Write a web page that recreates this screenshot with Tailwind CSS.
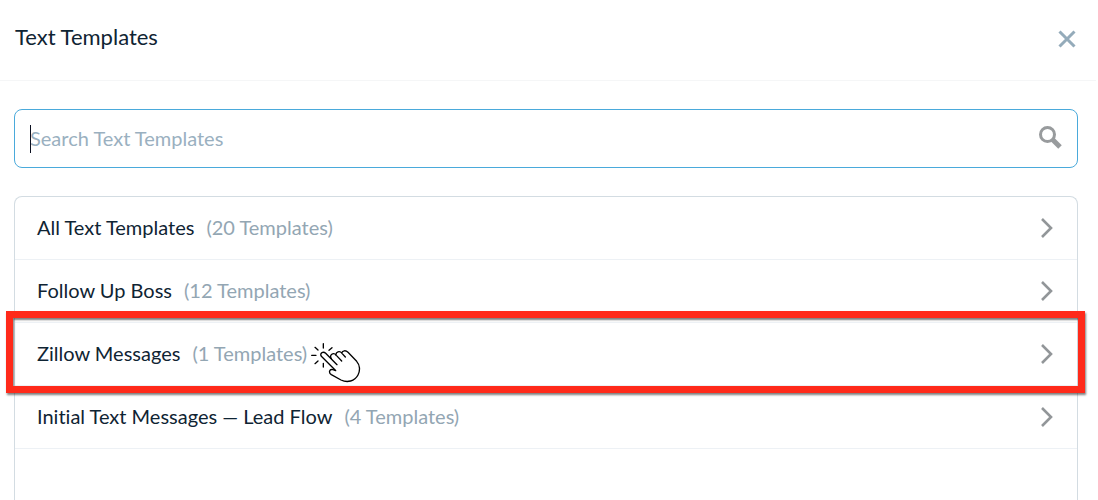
<!DOCTYPE html>
<html lang="en">
<head>
  <meta charset="UTF-8" />
  <meta name="viewport" content="width=device-width, initial-scale=1.0" />
  <title>Text Templates</title>
  <script src="https://cdn.jsdelivr.net/npm/@tailwindcss/browser@4"></script>
</head>

<body class="bg-white font-['Lato',sans-serif] text-[#0f2433] [font-variant-ligatures:none]">

  <div class="flex min-h-screen flex-col">

    <!-- Header -->
    <header class="mr-[2px] flex items-center justify-between border-b border-[#f5f6f7] pt-[23px] pr-[19px] pb-[29px] pl-[15px]">
      <h1 class="text-[22px] leading-7">Text Templates</h1>
      <button type="button" aria-label="Close" class="mt-1 text-[#94abba]">
        <svg class="h-5 w-5" viewBox="0 0 20 20" fill="none" stroke="currentColor" stroke-width="3">
          <path d="M2.500 2.500L17.500 17.500M17.500 2.500L2.500 17.500" />
        </svg>
      </button>
    </header>

    <main class="flex flex-1 flex-col pt-7 pr-5 pl-[14px]">

      <!-- Search -->
      <div class="relative flex h-[59px] items-center rounded-lg border border-[#4aaadb] px-[15px]">
        <input type="text" id="search" aria-label="Search Text Templates" placeholder="Search Text Templates" class="h-full flex-1 pb-[2px] text-[20px] outline-none placeholder:text-[#9ab0c0]" />
        <span class="absolute left-[15px] h-7 w-px bg-[#0b1020]"></span>
        <svg class="mb-1 h-6 w-6" viewBox="0 0 24 24" fill="none" stroke="#989b9d">
          <circle cx="9.500" cy="9.500" r="7" stroke-width="3" />
          <path d="M14 14L22 22" stroke-width="5" />
        </svg>
      </div>

      <!-- Template folders -->
      <ul class="mt-7 flex-1 rounded-t-lg border border-b-0 border-[#d3dce2] text-[20px] leading-[30px]">
        <li class="border-b border-[#edf1f5]">
          <a href="#" class="flex items-center pt-[15px] pr-6 pb-[17px] pl-[22px]">
            <span>All Text Templates</span>
            <span class="ml-3 text-[#93a6b3]">(20 Templates)</span>
            <svg class="mt-px ml-auto h-5 w-3" viewBox="0 0 12 20" fill="none" stroke="#929699" stroke-width="2.600"><path d="M1 1L10 10L1 19" /></svg>
          </a>
        </li>
        <li class="border-b border-[#edf1f5]">
          <a href="#" class="flex items-center pt-[15px] pr-6 pb-[17px] pl-[22px]">
            <span>Follow Up Boss</span>
            <span class="ml-3 text-[#93a6b3]">(12 Templates)</span>
            <svg class="mt-px ml-auto h-5 w-3" viewBox="0 0 12 20" fill="none" stroke="#929699" stroke-width="2.600"><path d="M1 1L10 10L1 19" /></svg>
          </a>
        </li>
        <li class="relative border-b border-[#edf1f5]">
          <a href="#" class="flex items-center pt-[15px] pr-6 pb-[17px] pl-[22px]">
            <span>Zillow Messages</span>
            <span class="relative ml-3 text-[#93a6b3]">(1 Templates)
              <!-- Clicking hand -->
              <svg class="absolute top-1 left-full ml-1 h-[41px] w-[50px] max-w-none" viewBox="63 63 150 123" fill="none" stroke="#000" stroke-width="4" stroke-linecap="round" stroke-linejoin="round">
                <path d="M100 68V81M126 80L117 88M75 79L84 87M65 103H78M75 128L84 120M100 127V138" />
                <path d="M136 148L94 106C88 98 99 89 107 97L141 131" />
                <path d="M124 113C117 102 130 92 139 103L155 120M138 103C137 92 149 88 156 97L166 108M155 96C158 88 167 87 174 94L200 121C210 132 211 149 204 162C194 181 172 186 153 177L124 161C115 155 118 143 129 146L137 149" />
              </svg>
            </span>
            <svg class="mt-px ml-auto h-5 w-3" viewBox="0 0 12 20" fill="none" stroke="#929699" stroke-width="2.600"><path d="M1 1L10 10L1 19" /></svg>
          </a>
          <!-- Highlight frame -->
          <div class="pointer-events-none absolute -top-3 -right-2 -bottom-2 -left-[9px] border-7 border-[#ff2a1a] shadow-[1px_2px_2px_rgba(0,0,0,0.5),inset_1px_2px_2px_rgba(0,0,0,0.5)]"></div>
        </li>
        <li class="border-b border-[#edf1f5]">
          <a href="#" class="flex items-center pt-[15px] pr-6 pb-[17px] pl-[22px]">
            <span>Initial Text Messages — Lead Flow</span>
            <span class="ml-3 text-[#93a6b3]">(4 Templates)</span>
            <svg class="mt-px ml-auto h-5 w-3" viewBox="0 0 12 20" fill="none" stroke="#929699" stroke-width="2.600"><path d="M1 1L10 10L1 19" /></svg>
          </a>
        </li>
      </ul>
    </main>
  </div>

</body>
</html>
